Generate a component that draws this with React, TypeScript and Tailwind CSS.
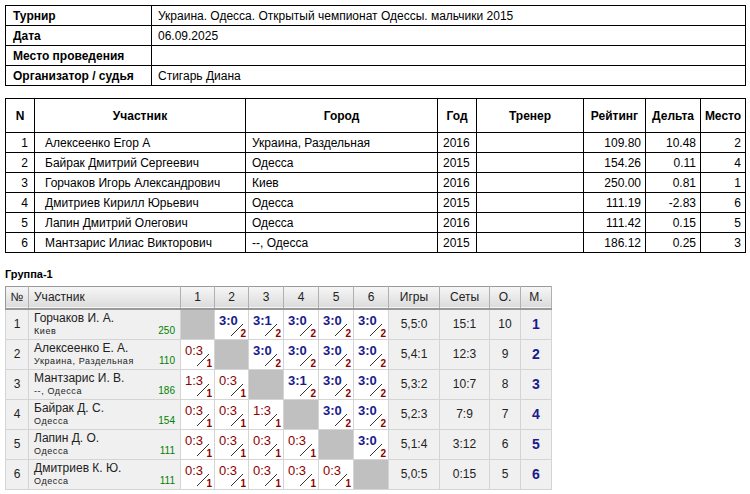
import React from "react";

const info = [
  ["Турнир", "Украина. Одесса. Открытый чемпионат Одессы. мальчики 2015"],
  ["Дата", "06.09.2025"],
  ["Место проведения", ""],
  ["Организатор / судья", "Стигарь Диана"],
];
const players = [
  ["1", "Алексеенко Егор А", "Украина, Раздельная", "2016", "109.80", "10.48", "2"],
  ["2", "Байрак Дмитрий Сергеевич", "Одесса", "2015", "154.26", "0.11", "4"],
  ["3", "Горчаков Игорь Александрович", "Киев", "2016", "250.00", "0.81", "1"],
  ["4", "Дмитриев Кирилл Юрьевич", "Одесса", "2015", "111.19", "-2.83", "6"],
  ["5", "Лапин Дмитрий Олегович", "Одесса", "2016", "111.42", "0.15", "5"],
  ["6", "Мантзарис Илиас Викторович", "--, Одесса", "2015", "186.12", "0.25", "3"],
];
const group = [
  ["Горчаков И. А.", "Киев", "250", ["", "3:0", "3:1", "3:0", "3:0", "3:0"], "5,5:0", "15:1", "10", "1"],
  ["Алексеенко Е. А.", "Украина, Раздельная", "110", ["0:3", "", "3:0", "3:0", "3:0", "3:0"], "5,4:1", "12:3", "9", "2"],
  ["Мантзарис И. В.", "--, Одесса", "186", ["1:3", "0:3", "", "3:1", "3:0", "3:0"], "5,3:2", "10:7", "8", "3"],
  ["Байрак Д. С.", "Одесса", "154", ["0:3", "0:3", "1:3", "", "3:0", "3:0"], "5,2:3", "7:9", "7", "4"],
  ["Лапин Д. О.", "Одесса", "111", ["0:3", "0:3", "0:3", "0:3", "", "3:0"], "5,1:4", "3:12", "6", "5"],
  ["Дмитриев К. Ю.", "Одесса", "111", ["0:3", "0:3", "0:3", "0:3", "0:3", ""], "5,0:5", "0:15", "5", "6"],
] as const;

function Score({ s }: { s: string }) {
  if (!s) return <td className="bg-[#c0c0c0] border border-[#d4d4d4]" />;
  const win = s.startsWith("3");
  return (
    <td className="relative border border-[#d4d4d4] bg-white p-0 h-[30px]">
      <div className="relative h-[29px]">
        <span className={`absolute left-[4px] top-[3px] text-[13px] leading-[15px] ${win ? "font-bold text-[#1a1a8c]" : "text-[#8b0000]"}`}>{s}</span>
        <svg className="absolute left-[15px] top-[13px]" width="14" height="14" viewBox="0 0 14 14">
          <line x1="1" y1="13" x2="13" y2="1" stroke="#333" strokeWidth="1" />
        </svg>
        <span className="absolute right-[2px] bottom-0 text-[10px] leading-[11px] font-bold text-[#8b0000]">{win ? "2" : "1"}</span>
      </div>
    </td>
  );
}

export default function App() {
  const b = "border border-black";
  return (
    <div className="bg-white w-[750px] h-[494px] text-[12px] text-black" style={{ fontFamily: "'Liberation Sans', Arial, sans-serif" }}>
      <div className="px-[5px] pt-[5px]">
        <table className="w-[741px] border-collapse table-fixed">
          <colgroup><col className="w-[146px]" /><col /></colgroup>
          <tbody>
            {info.map(([k, v]) => (
              <tr key={k} className="h-[20px]">
                <td className={`${b} font-bold px-[7px] py-0`}>{k}</td>
                <td className={`${b} px-[6px] py-0`}>{v}</td>
              </tr>
            ))}
          </tbody>
        </table>
        <table className="w-[741px] border-collapse table-fixed mt-[12px]">
          <colgroup>
            <col className="w-[29px]" /><col className="w-[211px]" /><col className="w-[192px]" /><col className="w-[39px]" />
            <col className="w-[107px]" /><col className="w-[62px]" /><col className="w-[55px]" /><col />
          </colgroup>
          <thead>
            <tr className="h-[34px] font-bold">
              {["N", "Участник", "Город", "Год", "Тренер", "Рейтинг", "Дельта", "Место"].map((h) => (
                <td key={h} className={`${b} text-center`}>{h}</td>
              ))}
            </tr>
          </thead>
          <tbody>
            {players.map((p) => (
              <tr key={p[0]} className="h-[20px]">
                <td className={`${b} text-right px-[6px]`}>{p[0]}</td>
                <td className={`${b} px-[10px]`}>{p[1]}</td>
                <td className={`${b} px-[6px]`}>{p[2]}</td>
                <td className={`${b} px-[5px]`}>{p[3]}</td>
                <td className={b}></td>
                <td className={`${b} text-right px-[4px]`}>{p[4]}</td>
                <td className={`${b} text-right px-[4px]`}>{p[5]}</td>
                <td className={`${b} text-right px-[4px]`}>{p[6]}</td>
              </tr>
            ))}
          </tbody>
        </table>
        <div className="font-bold text-[11px] mt-[15px] mb-[5px] leading-[13px]">Группа-1</div>
        <table className="w-[547px] border-collapse table-fixed border border-[#999]">
          <colgroup>
            <col className="w-[23px]" /><col className="w-[152px]" />
            <col className="w-[34px]" /><col className="w-[34px]" /><col className="w-[35px]" /><col className="w-[35px]" /><col className="w-[35px]" /><col className="w-[35px]" />
            <col className="w-[51px]" /><col className="w-[50px]" /><col className="w-[31px]" /><col />
          </colgroup>
          <thead>
            <tr className="h-[22px] bg-gradient-to-b from-[#f6f6f6] to-[#dcdcdc] text-[12px] text-[#222] border-b-2 border-[#999]">
              {["№", "Участник", "1", "2", "3", "4", "5", "6", "Игры", "Сеты", "О.", "М."].map((h, i) => (
                <td key={h} className={`border-r border-[#b0b0b0] ${i === 1 ? "text-left px-[5px]" : "text-center"}`}>{h}</td>
              ))}
            </tr>
          </thead>
          <tbody>
            {group.map((g, r) => (
              <tr key={r} className="h-[30px] bg-[#f0f0f0] text-[#222]">
                <td className="border border-[#d4d4d4] text-center text-[12px]">{r + 1}</td>
                <td className="border border-[#d4d4d4] px-[5px] py-0 align-top">
                  <div className="text-[12px] leading-[14px] mt-[1px]">{g[0]}</div>
                  <div className="flex justify-between text-[9px] leading-[12px] tracking-[0.6px]">
                    <span>{g[1]}</span><span className="text-[#008000] text-[10px] tracking-normal">{g[2]}</span>
                  </div>
                </td>
                {g[3].map((s, i) => <Score key={i} s={s} />)}
                <td className="border border-[#d4d4d4] text-center text-[12px]">{g[4]}</td>
                <td className="border border-[#d4d4d4] text-center text-[12px]">{g[5]}</td>
                <td className="border border-[#d4d4d4] text-center text-[12px]">{g[6]}</td>
                <td className="border border-[#d4d4d4] text-center text-[14px] font-bold text-[#1a1a8c]">{g[7]}</td>
              </tr>
            ))}
          </tbody>
        </table>
      </div>
    </div>
  );
}
